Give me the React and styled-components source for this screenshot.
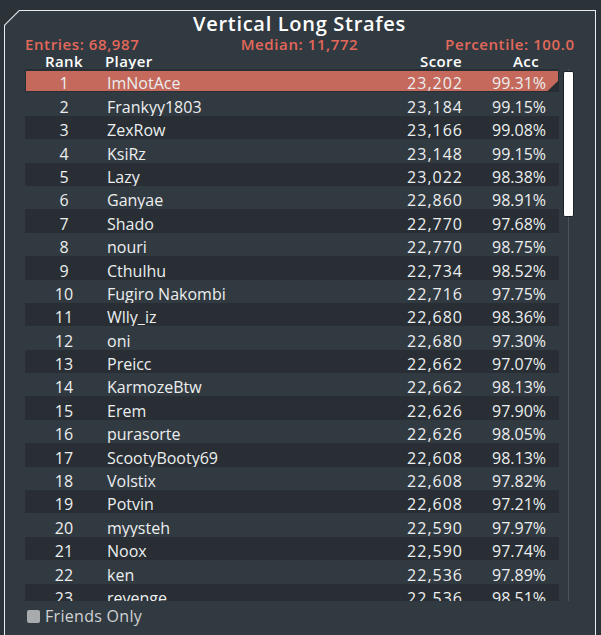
import React from 'react';
import styled, { createGlobalStyle } from 'styled-components';

const GlobalStyle = createGlobalStyle`
  html, body {
    margin: 0;
    padding: 0;
    background: #2c3338;
    overflow: hidden;
  }
  body {
    font-family: "Open Sans", "Noto Sans", sans-serif;
  }
`;

const Frame = styled.div`
  margin: 10px 5px 0 4px;
  background: #e9ecee;
  clip-path: polygon(15px 0, 100% 0, 100% 100%, 0 100%, 0 15px);
  padding: 1px 1px 0 1px;
`;

const Panel = styled.div`
  background: #323a41;
  clip-path: polygon(14.5px 0, 100% 0, 100% 100%, 0 100%, 0 14.5px);
  padding: 2px 21px 40px 20px;
  height: 640px;
  box-sizing: border-box;
`;

const Title = styled.div`
  text-align: center;
  color: #ffffff;
  font-size: 20px;
  line-height: 22px;
  font-weight: 600;
  letter-spacing: 0.7px;
`;

const Stats = styled.div`
  display: grid;
  grid-template-columns: 1fr auto 1fr;
  color: #e2685a;
  font-size: 15px;
  line-height: 16px;
  font-weight: 600;
  letter-spacing: 0.6px;
  margin-top: 0.6px;

  span:nth-child(1) { justify-self: start; }
  span:nth-child(2) { justify-self: center; }
  span:nth-child(3) { justify-self: end; margin-right: -0.6px; }
`;

const Body = styled.div`
  display: flex;
  gap: 4px;
  margin-top: 1px;
`;

const Main = styled.div`
  flex: 1;
`;

const Columns = styled.div`
  display: grid;
  grid-template-columns: 78px 1fr 100px 97px;
`;

const HeaderRow = styled(Columns)`
  color: #ffffff;
  font-size: 15px;
  line-height: 16px;
  font-weight: 600;
  letter-spacing: 0.4px;
`;

const Cell = styled.div`
  text-align: ${p => p.$align || 'left'};
  padding-left: ${p => p.$pl || 0}px;
  white-space: nowrap;
`;

const Score = styled(Cell)`
  letter-spacing: 1px;
  margin-right: -1px;
`;

const List = styled.div`
  margin-top: 0.4px;
  height: 532px;
  overflow: hidden;
`;

const Row = styled(Columns)`
  position: relative;
  height: 23.4px;
  overflow: hidden;
  background: ${p => (p.$odd ? '#282e34' : 'transparent')};
  color: #eceeef;
  font-size: 16px;
  line-height: 20px;

  &::before {
    content: '';
    display: ${p => (p.$active ? 'block' : 'none')};
    position: absolute;
    inset: 2px 1px 1px 1px;
    background: #c4695b;
    clip-path: polygon(0 0, 100% 0, 100% 10px, calc(100% - 11px) 100%, 0 100%);
  }

  ${Cell} {
    position: relative;
    padding-top: 4.4px;
  }
`;

const ScrollCol = styled.div`
  width: 11px;
  height: 532px;
  margin-top: 16px;
  position: relative;
  display: flex;
  justify-content: center;

  &::before {
    content: '';
    width: 1px;
    height: 100%;
    background: #4a535a;
  }
`;

const Thumb = styled.div`
  position: absolute;
  top: 2px;
  left: 0;
  width: 11px;
  height: 146px;
  box-sizing: border-box;
  background: #ffffff;
  border: 1px solid #1d2226;
  border-radius: 2px;
`;

const Footer = styled.label`
  display: flex;
  align-items: center;
  gap: 5px;
  margin-top: 9px;
  padding-left: 2px;
  color: #cfd2d4;
  font-size: 16px;
  line-height: 13px;
  letter-spacing: 0.3px;
`;

const Check = styled.span`
  width: 13px;
  height: 13px;
  border-radius: 2px;
  background: #a8abad;
`;

const rows = [
  ['ImNotAce', '23,202', '99.31%'],
  ['Frankyy1803', '23,184', '99.15%'],
  ['ZexRow', '23,166', '99.08%'],
  ['KsiRz', '23,148', '99.15%'],
  ['Lazy', '23,022', '98.38%'],
  ['Ganyae', '22,860', '98.91%'],
  ['Shado', '22,770', '97.68%'],
  ['nouri', '22,770', '98.75%'],
  ['Cthulhu', '22,734', '98.52%'],
  ['Fugiro Nakombi', '22,716', '97.75%'],
  ['Wlly_iz', '22,680', '98.36%'],
  ['oni', '22,680', '97.30%'],
  ['Preicc', '22,662', '97.07%'],
  ['KarmozeBtw', '22,662', '98.13%'],
  ['Erem', '22,626', '97.90%'],
  ['purasorte', '22,626', '98.05%'],
  ['ScootyBooty69', '22,608', '98.13%'],
  ['Volstix', '22,608', '97.82%'],
  ['Potvin', '22,608', '97.21%'],
  ['myysteh', '22,590', '97.97%'],
  ['Noox', '22,590', '97.74%'],
  ['ken', '22,536', '97.89%'],
  ['revenge', '22,536', '98.51%'],
];

export default function App() {
  return (
    <>
      <GlobalStyle />
      <Frame>
        <Panel>
          <Title>Vertical Long Strafes</Title>
          <Stats>
            <span>Entries: 68,987</span>
            <span>Median: 11,772</span>
            <span>Percentile: 100.0</span>
          </Stats>
          <Body>
            <Main>
              <HeaderRow>
                <Cell $align="center">Rank</Cell>
                <Cell $pl={2}>Player</Cell>
                <Cell $align="right">Score</Cell>
                <Cell $align="center" $pl={31}>Acc</Cell>
              </HeaderRow>
              <List>
                {rows.map(([name, score, acc], i) => (
                  <Row key={name} $odd={i % 2 === 0} $active={i === 0}>
                    <Cell $align="center">{i + 1}</Cell>
                    <Cell $pl={4}>{name}</Cell>
                    <Score $align="right">{score}</Score>
                    <Cell $align="center" $pl={17}>{acc}</Cell>
                  </Row>
                ))}
              </List>
            </Main>
            <ScrollCol>
              <Thumb />
            </ScrollCol>
          </Body>
          <Footer>
            <Check />
            Friends Only
          </Footer>
        </Panel>
      </Frame>
    </>
  );
}
